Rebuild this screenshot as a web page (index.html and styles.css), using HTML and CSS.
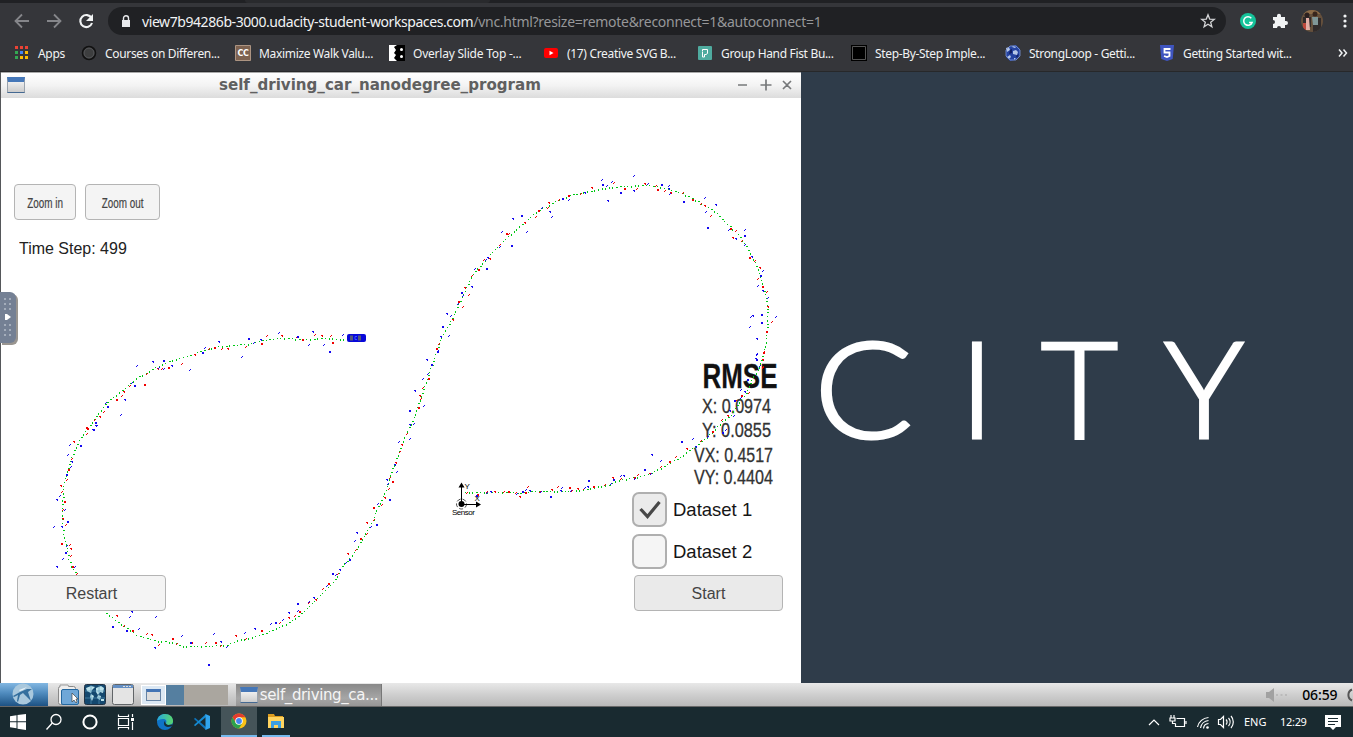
FILE: index.html
```html
<!DOCTYPE html>
<html lang="en">
<head>
<meta charset="utf-8">
<title>self_driving_car_nanodegree_program</title>
<link rel="stylesheet" href="styles.css">
</head>
<body>
<header class="browser">
  <div class="tabstrip"><i></i></div>
  <div class="toolbar">
    <svg class="nav" width="100" height="24" viewBox="0 0 100 24" fill="none" stroke-width="1.8">
      <path stroke="#85868a" d="M29 12H16M22 5.500L15.500 12l6.500 6.500M47 12h13M54 5.500l6.500 6.500-6.500 6.500"/>
      <path stroke="#f1f3f4" stroke-width="2.100" d="M91.500 9A6 6 0 1 0 92 14"/><path fill="#f1f3f4" d="M93 5v7h-7z"/>
    </svg>
    <div class="omnibox">
      <svg class="lock" width="10" height="13" viewBox="0 0 10 13"><path fill="#e8eaed" d="M1 5h8v7H1z"/><path fill="none" stroke="#e8eaed" stroke-width="1.400" d="M2.500 5V3.200a2.500 2.500 0 0 1 5 0V5"/></svg>
      <span class="url"><b>view7b94286b-3000.udacity-student-workspaces.com</b>/vnc.html?resize=remote&amp;reconnect=1&amp;autoconnect=1</span>
      <svg class="star" width="16" height="16" viewBox="0 0 16 16"><path fill="none" stroke="#d4d5d7" stroke-width="1.300" d="M8 1.800l1.700 4.300 4.600.3-3.600 2.900 1.200 4.500L8 11.300l-3.900 2.500 1.200-4.500-3.600-2.900 4.600-.3z"/></svg>
    </div>
    <svg class="tools" width="112" height="24" viewBox="1239 9 112 24">
      <circle cx="1248" cy="21" r="8" fill="#15c39a"/><path fill="none" stroke="#fff" stroke-width="1.500" d="M1251.300 18.200a4.300 4.300 0 1 0 .8 4.200h-3"/>
      <path fill="#f1f3f4" d="M1273 17h4v-1.200a2 2 0 0 1 4 0V17h4v4h1a2 2 0 0 1 0 4h-1v3h-4a2 2 0 0 0-4 0h-4v-4a2 2 0 0 0 0-4z"/>
      <clipPath id="av"><circle cx="1312" cy="21" r="11"/></clipPath>
      <g clip-path="url(#av)"><path fill="#65503c" d="M1300 9h24v24h-24z"/><path fill="#8b6b48" d="M1300 9h24v5h-24z"/><path fill="#302b2b" d="M1303 17h8v10h-8zM1313 18h8v16h-8z"/><circle cx="1307" cy="15" r="2.500" fill="#2b2020"/><circle cx="1315" cy="14" r="2.500" fill="#38261d"/><path fill="#7f9697" d="M1312 17h6v8h-5z"/><path fill="#e4afa6" d="M1306 18h3l1 12h-4z"/><path fill="#bf493d" d="M1303 23h3v7h-3z"/></g>
      <g fill="#f1f3f4"><circle cx="1345" cy="16" r="1.600"/><circle cx="1345" cy="21" r="1.600"/><circle cx="1345" cy="26" r="1.600"/></g>
    </svg>
  </div>
  <nav class="bookmarks">
    <div class="bm w1"><svg width="16" height="16" viewBox="0 0 16 16"><path fill="#ea4335" d="M1 1h3v3H1zM6 1h3v3H6zM11 1h3v3h-3z"/><path fill="#34a853" d="M1 6h3v3H1zM1 11h3v3H1z"/><path fill="#4285f4" d="M6 6h3v3H6z"/><path fill="#fbbc04" d="M11 6h3v3h-3zM6 11h3v3H6zM11 11h3v3h-3z"/></svg><span>Apps</span></div>
    <div class="bm w2"><svg width="16" height="16" viewBox="0 0 16 16"><circle cx="8" cy="8" r="6.500" fill="#292a2c" stroke="#111" stroke-width="1.500"/><circle cx="8" cy="8" r="5" fill="#3d3e3f" stroke="#66676a" stroke-width=".7"/></svg><span>Courses on Differen...</span></div>
    <div class="bm w3"><svg width="16" height="16" viewBox="0 0 16 16"><path fill="#7d6250" stroke="#ac9482" d="M.5.500h15v15H.5z"/><text x="2.500" y="11" class="cc" textLength="11">CC</text></svg><span>Maximize Walk Valu...</span></div>
    <div class="bm w4"><svg width="16" height="16" viewBox="0 0 16 16"><path fill="#fff" d="M0 0h9v16H0z"/><path fill="#000" d="M8 0h8v16H8l-3-3 2-3-2-2 2-3-2-3z"/><circle cx="12.500" cy="4.500" r="1.500" fill="#fff"/><circle cx="12.500" cy="11.500" r="1.500" fill="#fff"/></svg><span>Overlay Slide Top -...</span></div>
    <div class="bm w5"><svg width="16" height="16" viewBox="0 0 16 16"><rect x="1" y="3" width="14" height="10" rx="2" fill="#f00"/><path fill="#fff" d="M6.500 5.700v4.600l4-2.300z"/></svg><span>(17) Creative SVG B...</span></div>
    <div class="bm w6"><svg width="16" height="16" viewBox="0 0 16 16"><rect x="1" y="1" width="14" height="14" rx="1" fill="#4fab9f"/><path fill="none" stroke="#fff" d="M5.500 6.500v-2h5v4l-1.500 1H7.500V12h-2V7"/></svg><span>Group Hand Fist Bu...</span></div>
    <div class="bm w7"><svg width="16" height="16" viewBox="0 0 16 16"><path fill="#000" d="M0 0h16v16H0z"/><path fill="#000" stroke="#555" d="M1.500 1.500h13v13h-13z"/></svg><span>Step-By-Step Imple...</span></div>
    <div class="bm w8"><svg width="16" height="16" viewBox="0 0 16 16"><path fill="#2543a0" d="M5 1l6-1 4 4v6l-4 5-6 1-4-4V5z"/><path fill="#b5c6e6" d="M1 3l3-1 1 3-3 2zM8 1l3 1-1 1-3-1zM8 6l3-1 2 2-1 3-4-1zM2 12l3-2 1 2-2 2zM9 13l2 0-2 2z"/><path fill="none" stroke="#7f9bdc" stroke-width=".8" d="M5 1l6 0 4 4v6l-4 4H5l-4-4V5z"/><path fill="#101e63" d="M5 5l2-1v4l-3 1zM11 11l3-2-2 4z"/></svg><span>StrongLoop - Getti...</span></div>
    <div class="bm w9"><svg width="16" height="16" viewBox="0 0 16 16"><path fill="#3f55c0" d="M1 0h14l-1.300 14L8 16l-5.700-2z"/><path fill="none" stroke="#fff" stroke-width="1.800" d="M11.500 4h-6v3.500h5V11L8 12l-3-1"/></svg><span>Getting Started wit...</span></div>
    <svg class="more" width="11" height="10" viewBox="0 0 11 10"><path fill="none" stroke="#f1f3f4" stroke-width="1.500" d="M1 1.500L4 5 1 8.500M5.500 1.500l3 3.500-3 3.500"/></svg>
  </nav>
</header>

<main class="desktop">
  <section class="window">
    <div class="titlebar">
      <i class="winicon"></i><h1><span>self_driving_car_nanodegree_program</span></h1>
      <svg width="52" height="12" viewBox="0 0 52 12" fill="none" stroke="#77797b" stroke-width="1.700"><path d="M0 6h9M22.500 6h11M28 .500v11M45 2l8 8M53 2l-8 8"/></svg>
    </div>
    <div class="sim">
      <svg class="plot" id="plot" width="800" height="585" viewBox="1 98 800 585">
        <g class="labels">
          <text x="702.500" y="387.500" class="rmse" textLength="75" lengthAdjust="spacingAndGlyphs">RMSE</text>
          <text x="702" y="413" textLength="69" lengthAdjust="spacingAndGlyphs">X: 0.0974</text>
          <text x="702" y="437" textLength="69" lengthAdjust="spacingAndGlyphs">Y: 0.0855</text>
          <text x="694" y="462" textLength="79" lengthAdjust="spacingAndGlyphs">VX: 0.4517</text>
          <text x="694" y="484" textLength="79" lengthAdjust="spacingAndGlyphs">VY: 0.4404</text>
        </g>
        <g class="dots" id="dots"></g>
        <g class="car"><rect x="347" y="334" width="19" height="8" rx="2" fill="#0808d9"/><path fill="#555a79" d="M350 335.500h3v5h-3zM358 335.500h3v5h-3z"/><path fill="none" stroke="#3858ff" d="M357 336.500h-2v3h2"/></g>
        <g class="sensor"><path fill="none" stroke="#000" d="M461.500 504v-17M461 504.500h16"/><path d="M461.500 482.500l3 5h-6zM481 504.500l-5 3v-6z"/><circle cx="461.500" cy="504" r="3"/><circle cx="461.500" cy="504" r="5" fill="none" stroke="#000" stroke-width=".7" stroke-dasharray="4 2"/><text x="464.500" y="489">Y</text><text x="474.500" y="501">X</text><text x="452" y="515" textLength="23">Sensor</text></g>
      </svg>
      <button class="btn zin"><span>Zoom in</span></button>
      <button class="btn zout"><span>Zoom out</span></button>
      <div class="step"><span>Time Step: 499</span></div>
      <button class="btn restart"><span>Restart</span></button>
      <div class="sets">
        <label><i class="box on"><svg width="24" height="20" viewBox="0 0 24 20"><path fill="none" stroke="#484848" stroke-width="3.200" d="M2.500 9l7 7.500L21.500 2"/></svg></i><span>Dataset 1</span></label>
        <label><i class="box"></i><span>Dataset 2</span></label>
      </div>
      <button class="btn start"><span>Start</span></button>
    </div>
  </section>
  <svg class="wallpaper" width="552" height="611" viewBox="801 72 552 611"><g class="city"><text x="814" y="438" textLength="99" lengthAdjust="spacingAndGlyphs">C</text><text x="977" y="438" text-anchor="middle">I</text><text x="1079.500" y="438" text-anchor="middle">T</text><text x="1204" y="438" text-anchor="middle">Y</text></g></svg>
  <aside class="handle"><svg width="15" height="50" viewBox="0 0 15 50"><g fill="#a4adbb"><path d="M4 6h2v2H4zM9 6h2v2H9zM4 11h2v2H4zM9 11h2v2H9zM4 16h2v2H4zM9 16h2v2H9zM4 32h2v2H4zM9 32h2v2H9zM4 37h2v2H4zM9 37h2v2H9zM4 42h2v2H4zM9 42h2v2H9z"/></g><path fill="#fff" d="M5 22h2l4 3-4 3H5z"/></svg></aside>
</main>

<div class="lxpanel">
  <div class="lxmenu"><svg width="24" height="22" viewBox="0 0 24 22"><circle cx="12" cy="11" r="10.500" fill="#a9c8dd"/><path fill="#346f9e" d="M2 13l7-4 7-3 5 0-4 3 3 9-5-5-3-3-3 2-2 7-1-1 1-6-4 2z"/><path fill="#e8f3f8" d="M8 7l8-3-4 3-3 1z"/></svg></div>
  <svg class="launch" width="78" height="22" viewBox="57 684 78 22">
    <rect x="58.500" y="686.500" width="17" height="18" rx="2" fill="#eee" stroke="#888"/><path fill="#eee" stroke="#999" d="M60 687v-2h8l1 2"/><rect x="61.500" y="689.500" width="17" height="15" rx="1.500" fill="#6fa7d7" stroke="#23679f"/><path fill="#fff" stroke="#444" stroke-width=".7" d="M72 693v9l2-2 2 3 1-1-1-3h2z"/>
    <rect x="84.500" y="684.500" width="21" height="20" rx="2" fill="#14486f" stroke="#223344"/><path fill="#bce2ea" d="M86 688l5-2 4 1-3 3-1 3-4-2zM96 688l5-2 3 2-1 5-3-1-2 3-2-3zM91 694l3 2-2 5-2-4zM98 695l3 1-1 4-3-2zM101 699h3v2h-3z"/><path stroke="#5b9cbc" stroke-width=".6" d="M85 691h20M85 698h20M91 685v19M99 685v19"/>
    <rect x="112.500" y="684.500" width="21" height="20" rx="2" fill="#e4e4e4" stroke="#616568"/><path fill="#638fc4" d="M113 685h20v3h-20z"/><path stroke="#ddd" d="M123 686.500h8" stroke-dasharray="2 1"/>
  </svg>
  <div class="pager"><div class="cell first"><i></i></div><div class="cell second"></div><div class="cell third"></div></div>
  <div class="task"><i class="winicon"></i><span>self_driving_ca...</span></div>
  <svg class="mute" width="24" height="16" viewBox="0 0 24 16"><path fill="#a1a1a1" d="M1 5h3l5-4v14l-5-4H1z"/><path stroke="#b4b4b4" stroke-width="1.500" stroke-dasharray="2 2.500" d="M11 8h12"/></svg>
  <span class="vclock">06:59</span>
  <svg class="power" width="8" height="16" viewBox="0 0 8 16"><path fill="none" stroke="#555" stroke-width="2" d="M7 2.500A6 6 0 0 0 7 13.500"/></svg>
</div>

<footer class="taskbar">
  <div class="tb"><svg width="18" height="18" viewBox="0 0 18 18"><path fill="#fff" d="M1 3.200l6.500-1v6H1zM8.500 2L17 1v7.200H8.500zM1 9.200h6.500v6L1 14.300zM8.500 9.200H17V17l-8.500-1.300z"/></svg></div>
  <div class="tb"><svg width="18" height="18" viewBox="0 0 18 18"><g fill="none" stroke="#fff" stroke-width="1.300"><circle cx="11" cy="6.500" r="5"/><path d="M7.300 10L1.500 16.500"/></g></svg></div>
  <div class="tb"><svg width="18" height="18" viewBox="0 0 18 18"><circle cx="9" cy="9" r="6.600" fill="none" stroke="#fff" stroke-width="2"/></svg></div>
  <div class="tb"><svg width="18" height="18" viewBox="0 0 18 18"><path fill="none" stroke="#fff" stroke-width="1.200" d="M1.500 1.500v2h10v-2M1.500 16.500v-2h10v2M1.500 5.500h10v7h-10zM15.500 1v3M15.500 9v8"/><path fill="#fff" d="M14 5h3v3h-3z"/></svg></div>
  <div class="tb"><svg width="18" height="18" viewBox="0 0 18 18"><defs><linearGradient id="eg"><stop stop-color="#27a8e0"/><stop offset="1" stop-color="#58d66d"/></linearGradient></defs><circle cx="9" cy="9" r="8" fill="#0f73c7"/><path fill="url(#eg)" d="M1 8C2 3 5 1 9 1c5 0 8 3 8 7 0 3-2 4-5 4-2 0-3-1-2-2 1-2 0-4-3-4-3 0-5 1-6 2z"/><path fill="#172e36" d="M9 8c-2 2-1 6 3 6 2 0 4-1 5-2-1-1-3 0-5 0-2-1-3-2-3-4z"/></svg></div>
  <div class="tb"><svg width="18" height="18" viewBox="0 0 18 18"><path fill="#0e75bd" d="M2 4.700L13 14v3L1 6z"/><path fill="#168bd2" d="M2 13.300L13 4V1L1 12z"/><path fill="#31a5ee" d="M12.500 1L17 3v12l-4.500 2z"/></svg></div>
  <div class="tb active"><svg width="18" height="18" viewBox="0 0 18 18"><circle cx="9" cy="9" r="7.500" fill="#fbc116"/><path fill="#e33b2e" d="M2.500 5.200A7.500 7.500 0 0 1 15.500 5.300H9L6 11z"/><path fill="#2ca24c" d="M2.500 5.200A7.500 7.500 0 0 0 9 16.500l3.300-5.600-6.300 0z"/><circle cx="9" cy="9" r="3.800" fill="#fff"/><circle cx="9" cy="9" r="2.900" fill="#4285f4"/></svg></div>
  <div class="tb open"><svg width="18" height="18" viewBox="0 0 18 18"><path fill="#dc9d20" d="M1 2h6l1 2h8v4H1z"/><path fill="#ffd45f" d="M1 5h16v11H1z"/><path fill="#3a9ee4" d="M4 9h10v7h-3v-3H7v3H4z"/></svg></div>
  <svg class="tray" width="90" height="20" viewBox="1147 712 90 20" fill="none" stroke="#fff" stroke-width="1.200">
    <path d="M1149 725l5-5 5 5M1176.500 718.500h8v8h-9v-3M1186 721v3M1171 715v3M1174 715v3M1170 718h5v3h-5zM1172.500 721v2.500h3"/>
    <path d="M1197.500 727a12 12 0 0 1 11-9.500M1200.500 728a9 9 0 0 1 8-7.500M1203.500 728.500a5.500 5.500 0 0 1 5-5"/><circle cx="1207.500" cy="727.500" r="1.300" fill="#fff" stroke="none"/>
    <path d="M1218.500 719.500h2l3-3v11l-3-3h-2zM1226 719.500a3.500 3.500 0 0 1 0 5M1228.500 718a6 6 0 0 1 0 8M1231 716a9 9 0 0 1 0 12"/>
  </svg>
  <span class="lang">ENG</span><span class="clock">12:29</span>
  <svg class="note" width="16" height="17" viewBox="0 0 16 17"><path fill="#fff" d="M0 1h16v12h-5l-3 3-3-3H0z"/><path stroke="#192a30" d="M3 4.500h10M3 7.500h10M3 10.500h7"/></svg>
</footer>
<script src="plot.js"></script>
</body>
</html>
```
FILE: styles.css
```css
* { box-sizing: border-box; }
body { margin: 0; width: 1353px; height: 737px; overflow: hidden; display: flex; flex-direction: column; font-family: "Noto Sans", sans-serif; background: #2f3c4a; }
svg { display: block; flex: none; }
.browser { height: 72px; flex: none; background: #35363a; border-bottom: 1px solid #27282a; }
.tabstrip { height: 3px; background: #202124; padding-left: 245px; }
.tabstrip i { display: block; width: 245px; height: 3px; background: #292a2d; border-radius: 0 0 4px 4px; }
.toolbar { height: 36px; display: flex; align-items: center; }
.nav { margin-right: 8px; }
.omnibox { width: 1118px; height: 28px; border-radius: 14px; background: #202124; display: flex; align-items: center; padding: 0 10px 0 13px; }
.lock { margin-right: 11px; }
.url { flex: 1; font-size: 14px; color: #969799; white-space: nowrap; letter-spacing: -0.29px; }
.url b { color: #f1f3f4; font-weight: 400; letter-spacing: -0.42px; }
.tools { margin-left: 13px; }
.bookmarks { height: 28px; display: flex; align-items: center; padding-left: 14px; font-size: 12px; color: #f1f3f4; white-space: nowrap; }
.bm { display: flex; align-items: center; gap: 8px; flex: none; letter-spacing: -0.33px; }
.w1 { width: 67px; }
.w2 { width: 154px; }
.w3 { width: 154px; }
.w4 { width: 154px; }
.w4 span { letter-spacing: -0.22px; }
.w5 { width: 154px; }
.w6 { width: 154px; }
.w7 { width: 154px; }
.w8 { width: 154px; }
.w9 { width: 179px; }
.cc { font: bold 8px "DejaVu Sans", sans-serif; fill: #fff; }

.desktop { position: relative; height: 611px; flex: none; display: flex; }
.window { width: 801px; border-left: 1px solid #55575a; background: #fff; }
.titlebar { height: 26px; border-top: 1px solid #aaa; background: linear-gradient(#fff, #f3f3f3 50%, #dcdcdc); display: flex; align-items: center; padding: 0 8px 2px 6px; }
.winicon { flex: none; width: 18px; height: 16px; border: 1px solid #9aa3ad; border-top: 5px solid #4577b8; border-bottom-color: #446992; background: linear-gradient(#eee, #ccc); }
.titlebar h1 { flex: 1; margin: 0; padding-left: 194px; font: bold 16px/24px "DejaVu Sans", sans-serif; color: #606060; white-space: nowrap; }
.titlebar h1 span { display: inline-block; transform: scaleX(.942); transform-origin: 0 50%; }
.titlebar svg { overflow: visible; margin-right: 3px; }
.sim { position: relative; height: 585px; font-family: "Liberation Sans", Arial, sans-serif; }
.plot { position: absolute; inset: 0; }
.labels { font-size: 20px; fill: #333; stroke: #333; stroke-width: .3px; }
.labels .rmse { font-size: 35px; font-weight: bold; fill: #111; }
.dots { shape-rendering: crispEdges; }
.sensor text { font-size: 8px; fill: #000; }
.btn { position: absolute; padding: 2px 0 0; display: flex; align-items: center; justify-content: center; height: 36px; border: 1.5px solid #b4b4b4; border-radius: 4px; background: #f4f4f4; color: #444; font: 16px "Liberation Sans", Arial, sans-serif; white-space: nowrap; }
.zin { left: 13px; top: 86px; width: 62px; padding: 0; }
.zout { left: 84px; top: 86px; width: 75px; padding: 0; }
.zin span, .zout span { font-size: 15px; transform: scaleX(.66); -webkit-text-stroke: .2px #444; }
.restart { left: 16px; top: 477px; width: 149px; }
.start { left: 633px; top: 477px; width: 149px; background: #eaeaea; }
.step { position: absolute; left: 18px; top: 141px; font-size: 17px; line-height: 20px; color: #222; white-space: nowrap; }
.step span { display: inline-block; transform: scaleX(.94); transform-origin: 0 50%; }
.sets { position: absolute; left: 631px; top: 394px; display: flex; flex-direction: column; gap: 7px; }
.sets label { display: flex; align-items: center; gap: 6px; font-size: 18.5px; color: #161616; white-space: nowrap; }
.box { width: 35px; height: 35px; border: 2px solid #afafaf; border-radius: 7px; background: #f5f5f5; display: flex; align-items: center; justify-content: center; }
.box.on { background: #ebebeb; }
.wallpaper { background: #2f3c4a; }
.city { font-family: Lato, sans-serif; font-weight: 300; font-size: 133.5px; fill: #fff; stroke: #fff; stroke-width: 3px; stroke-linejoin: miter; }
.handle { position: absolute; left: 0; top: 220px; width: 16px; height: 51px; border-radius: 0 6px 6px 0; background: #748094; box-shadow: 2px 2px 0 #999590; }

.lxpanel { height: 24px; flex: none; display: flex; align-items: center; background: linear-gradient(#e8e8e8, #cfcfcf 50%, #b9b9b9); border-bottom: 1px solid #686868; }
.lxmenu { width: 48px; height: 23px; padding-left: 11px; background: linear-gradient(#82b7e2, #4e8abd 45%, #1d5284); }
.launch { margin: 0 6px 0 9px; }
.pager { display: flex; height: 20px; width: 87px; }
.cell { height: 20px; }
.first { width: 25px; background: #dce8f3; border: 1px solid #fff; padding: 3px 4px; }
.first i { display: block; width: 15px; height: 12px; border: 1px solid #6683a4; border-top: 3px solid #4474b4; background: #ddd; }
.second { width: 18px; background: #557fa0; }
.third { width: 44px; background: #aaa69f; }
.task { width: 147px; height: 22px; margin-left: 8px; display: flex; align-items: center; gap: 2px; padding-left: 4px; background: linear-gradient(#898989, #a6a6a6 65%, #969696); border-right: 1px solid #777; color: #f5f5f5; font: 15px "DejaVu Sans", sans-serif; white-space: nowrap; }
.task span { letter-spacing: -0.38px; }
.mute { margin-left: 883px; }
.vclock { width: 43px; margin-left: 13px; font-size: 14px; font-weight: 500; letter-spacing: -0.1px; color: #000; white-space: nowrap; }
.power { margin-left: 0; }

.taskbar { height: 30px; flex: none; display: flex; background: #192a30; color: #fff; font-size: 11px; line-height: 30px; align-items: center; }
.tb { width: 36px; height: 30px; flex: none; display: flex; align-items: center; justify-content: center; }
.tb:nth-child(5) { margin-left: 3px; }
.tb:nth-child(6) { margin-left: 1px; }
.active { margin-left: 1px; background: #455459; border-bottom: 2px solid #76b9ed; }
.open { width: 28px; margin-left: 5px; border-bottom: 2px solid #76b9ed; }
.tray { margin-left: 857px; }
.lang { width: 36px; margin-left: 7px; }
.clock { width: 36px; letter-spacing: -0.3px; }
.note { margin-left: 9px; }
```
FILE: plot.js
```js
// Estimated track (green); consecutive points are joined by evenly spaced dots.
const track = `465 492 475 492 495 492 512 492 520 493 535 491 560 491 580 490 600 486 608 485 618 480 640 476 649 474 660 468 668 463 680 457 690 449 700 442 711 433 720 423 731 415 738 403 746 393 751 380 758 370 763 354 766 340 767 325 767 305 764 290 760 275 753 258 745 245 737 233 726 223 715 211 703 204 690 197 680 192 664 188 650 185 638 185 625 186 610 187 597 189 585 192 570 195 558 200 545 207 536 212 528 219 515 230 505 239 496 248 486 258 477 269 471 277 465 290 458 305 451 320 442 335 436 353 428 375 422 393 417 407 412 422 406 433 400 448 395 462 390 473 387 487 382 498 377 508 372 522 363 537 357 547 350 557 343 565 333 582 327 588 310 605 297 617 285 624 270 631 253 637 237 640 227 645 200 646 183 646 172 642 158 641 148 638 137 635 118 622 103 610 95 601 85 588 76 574 72 567 68 558 67 547 63 535 62 523 62 510 63 487 68 468 73 452 80 438 92 422 100 411 107 402 122 390 135 379 155 367 175 359 190 355 203 350 213 347 232 345 248 344 262 340 280 338 305 339 325 338 345 339`;

// Measurements: radar (red) and lidar (blue), per tile, in thirds of a pixel.
const tiles = [
  { x: 0, y: 170,
    r: `260 772 283 750 301 742 309 727 349 688 363 678 372 666 387 648 434 642 438 612 476 598 484 597 505 591 543 582 585 557 625 537 643 531 665 538 684 538 736 531 783 519 799 499 848 500 890 501 908 508 942 495 966 499 991 498 996 516`,
    b: `279 778 285 760 288 770 315 701 322 710 360 736 375 690 393 641 402 645 409 589 459 576 474 596 490 571 489 599 516 590 567 602 608 546 613 534 659 518 724 561 744 504 759 520 783 510 834 489 891 500 926 527 939 488 969 527 987 543 1028 495` },
  { x: 0, y: 420,
    r: `261 24 258 42 224 66 213 119 204 147 198 180 183 198 184 217 194 243 186 270 190 297 195 315 184 371 207 377 215 389 210 410 217 439 228 463 351 590 370 620 398 630 438 642 456 645 475 677 516 654 530 673 576 669 615 669 645 668 662 679 708 650 736 657 785 632 839 609 869 596 882 588 898 573 924 550 949 541 966 507 985 491 1012 463 1046 402 1067 391 1080 354 1099 343 1102 311 1120 302 1121 263 1145 255 1155 234 1166 207 1176 185 1168 175 1190 129 1198 98`,
    b: `285 8 288 20 279 30 207 75 242 75 201 107 216 127 211 141 198 162 177 229 171 240 192 270 201 303 161 321 186 322 200 380 195 398 187 418 173 443 222 443 338 618 387 591 396 578 467 592 380 630 414 627 465 684 543 650 570 667 639 642 664 666 680 681 624 732 733 641 766 627 810 613 825 606 848 602 869 580 891 575 893 551 924 546 943 536 978 500 997 461 1005 467 1020 450 1035 429 1048 419 1062 365 1071 341 1110 323 1128 313 1131 252 1161 180 1161 194 1167 237 1190 158 1187 137 1194 67` },
  { x: 400, y: 170,
    r: `109 535 116 523 159 452 186 413 175 395 206 376 195 355 214 320 236 299 250 270 270 269 299 225 318 191 326 193 376 159 405 141 416 120 441 114 449 101 474 91 506 77 540 74 576 56 640 40 673 54 710 58 736 43 765 49 772 57 792 63 815 69 847 69 878 87 900 103 915 110 930 138 990 174 1005 184 999 205 1023 213 1049 262 1063 275 1080 295 1073 329 1088 350 1099 368 1105 413 1114 457 1098 483 1091 548 1090 572 1086 594`,
    b: `94 582 113 544 125 502 144 500 127 470 152 438 141 433 173 402 183 366 188 379 217 353 223 298 258 294 255 272 264 264 299 232 333 225 304 188 339 147 378 188 364 136 423 116 450 127 453 141 488 85 504 90 557 69 603 32 606 43 618 50 626 94 633 36 660 68 700 19 704 64 742 43 783 42 805 50 808 58 807 73 849 95 912 84 948 107 916 127 922 172 986 180 1008 207 1032 180 1032 197 1032 227 1056 261 1087 303 1082 315 1072 348 1089 363 1101 385 1085 432 1052 443 1060 438 1125 443 1083 456 1047 473 1072 508 1068 554 1068 568 1077 590 82 571` },
  { x: 400, y: 350,
    r: `85 84 68 116 61 138 60 148 55 172 18 252 8 286 198 430 232 432 259 427 286 426 309 427 326 423 345 429 360 441 381 413 377 427 417 427 457 422 471 411 507 411 514 425 536 419 549 417 579 408 612 407 640 386 662 387 702 382 713 376 750 374 781 353 807 335 827 323 861 297 902 275 937 244 963 210 986 199 1007 155 1025 137 1045 130 1046 91 1087 52 1091 8`,
    b: `113 4 67 87 45 123 69 168 27 180 41 222 32 227 27 267 228 436 260 431 273 428 348 433 367 425 375 421 391 425 420 427 450 438 485 415 484 424 512 425 565 390 552 416 565 413 632 403 640 388 662 378 674 379 703 387 733 357 751 374 757 315 782 335 845 275 878 267 889 293 922 263 966 246 977 241 991 183 1000 199 1003 151 1022 122 1035 127 1020 144 1041 87 1068 15 1069 27 82 72` }
];

const layer = document.getElementById('dots');
function addPath(d, fill) {
  const p = document.createElementNS('http://www.w3.org/2000/svg', 'path');
  p.setAttribute('d', d);
  p.setAttribute('fill', fill);
  layer.appendChild(p);
}
function pairs(s) {
  const n = s.split(' ').map(Number), out = [];
  for (let i = 0; i < n.length; i += 2) out.push([n[i], n[i + 1]]);
  return out;
}

const pts = pairs(track);
let green = '', carry = 0;
for (let i = 1; i < pts.length; i++) {
  const [ax, ay] = pts[i - 1], [bx, by] = pts[i];
  const len = Math.hypot(bx - ax, by - ay);
  let t = carry;
  for (; t < len; t += 3.7) {
    const x = Math.round(ax + (bx - ax) * t / len), y = Math.round(ay + (by - ay) * t / len);
    if (x > 20 && x < 165 && y > 575 && y < 610) continue;
    green += ['h1v1h-1z', 'h1v2h-1z', 'h2v1h-2z'].map(s => `M${x} ${y}${s}`)[(x + y) % 3];
  }
  carry = t - len;
}
addPath(green, '#00c814');

for (const [key, fill] of [['r', '#f00000'], ['b', '#1408f0']]) {
  let d = '';
  for (const t of tiles) {
    pairs(t[key]).forEach(([px, py], i) => {
      const x = Math.floor(t.x + px / 3), y = Math.floor(t.y + py / 3);
      d += i % 4 === 0 ? `M${x} ${y}h2v2h-2z` : i % 2 ? `M${x} ${y}h1v1h-1zM${x + 1} ${y - 1}h1v1h-1z` : `M${x} ${y}h1v1h-1zM${x - 1} ${y - 1}h2v1h-2z`;
    });
  }
  addPath(d, fill);
}
```
